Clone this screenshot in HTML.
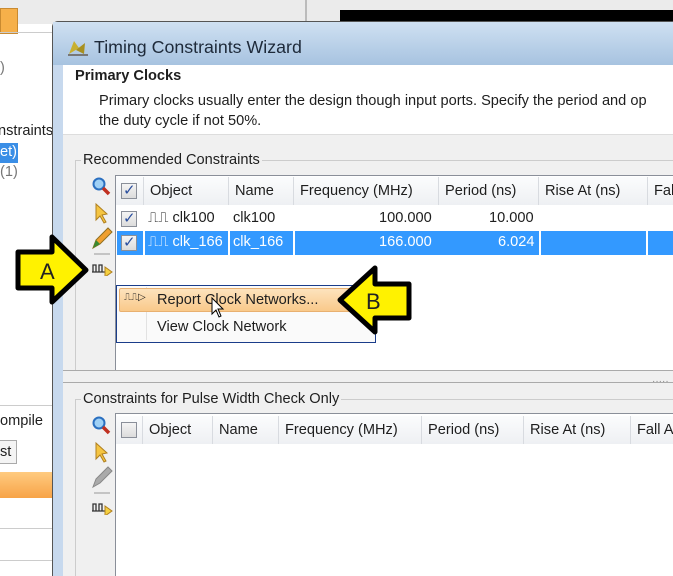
<!DOCTYPE html>
<html><head><style>
html,body{margin:0;width:673px;height:576px;overflow:hidden}
body{position:relative;background:#fff;font-family:"Liberation Sans","DejaVu Sans",sans-serif;font-size:14.6px;color:#1e1e1e}
.a{position:absolute}
.t{position:absolute;white-space:nowrap}
.hdr{position:absolute;background:linear-gradient(#fbfcfd,#eef0f3);border-right:1px solid #d8dbe0;height:28px;line-height:28px;padding-left:6px;box-sizing:border-box;white-space:nowrap;overflow:hidden}
.cb{position:absolute;width:14px;height:14px;border:1px solid #8a8f99;background:linear-gradient(#f4f4f4,#dcdcdc)}
.ck::after{content:"✓";position:absolute;left:1px;top:-3px;font-size:15px;color:#2b4f9e;font-weight:bold}
</style></head><body>
<div class="a" style="left:0;top:0;width:673px;height:24px;background:#ebebeb"></div>
<div class="a" style="left:0;top:8px;width:16px;height:24px;background:#f6b04a;border:1px solid #c98a30"></div>
<div class="a" style="left:0;top:32px;width:300px;height:1px;background:#ccc"></div>
<div class="a" style="left:305px;top:0;width:2px;height:24px;background:#bbb"></div>
<div class="a" style="left:340px;top:10px;width:333px;height:12px;background:#000"></div>
<div class="t" style="left:0;top:60px;color:#777">)</div>
<div class="t" style="left:-2px;top:123px">nstraints</div>
<div class="a" style="left:0;top:143px;width:18px;height:20px;background:#3a8ee6"></div>
<div class="t" style="left:0;top:144px;color:#fff">et)</div>
<div class="t" style="left:0;top:164px;color:#777">(1)</div>
<div class="a" style="left:0;top:405px;width:52px;height:1px;background:#ccc"></div>
<div class="t" style="left:0;top:413px">ompile</div>
<div class="a" style="left:0;top:440px;width:16px;height:22px;border:1px solid #aaa;border-left:none;background:#f4f4f4"></div>
<div class="t" style="left:0;top:444px">st</div>
<div class="a" style="left:0;top:472px;width:52px;height:26px;background:linear-gradient(#ffcb80,#f7a347)"></div>
<div class="a" style="left:0;top:528px;width:52px;height:1px;background:#ccc"></div>
<div class="a" style="left:0;top:560px;width:52px;height:1px;background:#ccc"></div>
<!-- dialog -->
<div class="a" style="left:52px;top:21px;width:630px;height:560px;background:#c7d9ee;border:1px solid #555;border-radius:6px 0 0 0"></div>
<div class="a" style="left:53px;top:22px;width:625px;height:43px;background:linear-gradient(#cfe0f2,#a7c3e0)"></div>
<svg class="a" style="left:66px;top:36px" width="24" height="22"><path d="M3 18 L8 5 L13 12 Z" fill="#c8b030"/><path d="M10 14 L19 7 L18 18 Z" fill="#a89020"/><path d="M2 19 L22 19" stroke="#777" stroke-width="2"/></svg>
<div class="t" style="left:94px;top:37px;font-size:17.8px;color:#1e2a3a">Timing Constraints Wizard</div>
<div class="a" style="left:63px;top:65px;width:610px;height:511px;background:#f0f0f0"></div>
<div class="a" style="left:63px;top:65px;width:610px;height:69px;background:#fff;border-bottom:1px solid #ddd"></div>
<div class="t" style="left:75px;top:68px;font-weight:bold">Primary Clocks</div>
<div class="t" style="left:99px;top:93px">Primary clocks usually enter the design though input ports. Specify the period and op</div>
<div class="t" style="left:99px;top:113px">the duty cycle if not 50%.</div>
<!-- group 1 -->
<div class="a" style="left:75px;top:160px;width:600px;height:210px;border:1px solid #ccc;border-right:none;border-bottom:none"></div>
<div class="t" style="left:81px;top:152px;background:#f0f0f0;padding:0 2px">Recommended Constraints</div>
<div class="a" style="left:115px;top:175px;width:560px;height:195px;background:#fff;border:1px solid #8a8f99;border-right:none;border-bottom:none"></div>
<div class="hdr" style="left:116px;top:177px;width:28px"></div><div class="cb ck" style="left:121px;top:183px"></div>
<div class="hdr" style="left:144px;top:177px;width:85px">Object</div>
<div class="hdr" style="left:229px;top:177px;width:65px">Name</div>
<div class="hdr" style="left:294px;top:177px;width:145px">Frequency (MHz)</div>
<div class="hdr" style="left:439px;top:177px;width:100px">Period (ns)</div>
<div class="hdr" style="left:539px;top:177px;width:109px">Rise At (ns)</div>
<div class="hdr" style="left:648px;top:177px;width:30px">Fal</div>
<div class="cb ck" style="left:121px;top:211px"></div>
<div class="t" style="left:148px;top:210px">⎍⎍ clk100</div>
<div class="t" style="left:233px;top:210px">clk100</div>
<div class="t" style="left:379px;top:210px">100.000</div>
<div class="t" style="left:489px;top:210px">10.000</div>
<div class="a" style="left:117px;top:231px;width:556px;height:24px;background:#3399ff"></div>
<div class="a" style="left:143px;top:231px;width:2px;height:24px;background:#fff"></div>
<div class="a" style="left:228px;top:231px;width:2px;height:24px;background:#fff"></div>
<div class="a" style="left:293px;top:231px;width:2px;height:24px;background:#fff"></div>
<div class="a" style="left:539px;top:231px;width:2px;height:24px;background:#fff"></div>
<div class="a" style="left:646px;top:231px;width:2px;height:24px;background:#fff"></div>
<div class="cb ck" style="left:121px;top:235px"></div>
<div class="t" style="left:148px;top:234px;color:#fff">⎍⎍ clk_166</div>
<div class="t" style="left:233px;top:234px;color:#fff">clk_166</div>
<div class="t" style="left:379px;top:234px;color:#fff">166.000</div>
<div class="t" style="left:498px;top:234px;color:#fff">6.024</div>
<!-- toolbar icons -->
<svg class="a" style="left:88px;top:176px" width="28" height="100">
<circle cx="11" cy="8" r="5.5" fill="#9fd0f5" stroke="#2a6fc0" stroke-width="2"/><path d="M15 12 L21 18" stroke="#c03020" stroke-width="3.5"/>
<path d="M8 28 L8 44 L12 40 L16 47 L18 46 L14 39 L19 38 Z" fill="#f5c542" stroke="#b08020"/>
<path d="M5 72 L8 64 L20 52 L24 56 L12 68 Z" fill="#f0a030" stroke="#907020"/><path d="M5 72 L8 64 L12 68Z" fill="#3a8a30"/>
<path d="M6 78 L22 78" stroke="#999"/>
<path d="M5 96 L5 89 L8 89 L8 96 L11 96 L11 89 L14 89 L14 96 M4 96 L18 96" stroke="#333" fill="none" stroke-width="1.3"/>
<path d="M17 91 L24 96 L17 101Z" fill="#f5d040" stroke="#b08020"/>
</svg>
<!-- menu -->
<div class="a" style="left:116px;top:285px;width:258px;height:56px;background:#fafafa;border:1px solid #1a3d8a"></div>
<div class="a" style="left:146px;top:287px;width:1px;height:53px;background:#e2e2e2"></div>
<div class="a" style="left:119px;top:288px;width:252px;height:24px;background:linear-gradient(#fde3bd,#f9c98a);border:1px solid #e8b070;border-radius:2px;box-sizing:border-box"></div>
<div class="t" style="left:124px;top:292px;font-size:10px">⎍⎍▷</div>
<div class="t" style="left:157px;top:292px">Report Clock Networks...</div>
<div class="t" style="left:157px;top:319px">View Clock Network</div>
<svg class="a" style="left:210px;top:296px" width="16" height="24"><path d="M2 2 L2 18 L6 14 L9 21 L11 20 L8 13 L13 13 Z" fill="#fff" stroke="#000"/></svg>
<!-- separators -->
<div class="a" style="left:63px;top:370px;width:610px;height:1px;background:#aaa"></div>
<div class="a" style="left:63px;top:382px;width:610px;height:1px;background:#aaa"></div>
<div class="t" style="left:652px;top:376px;font-size:10px;color:#888">·····</div>
<!-- group 2 -->
<div class="a" style="left:75px;top:399px;width:600px;height:190px;border:1px solid #ccc;border-right:none"></div>
<div class="t" style="left:81px;top:391px;background:#f0f0f0;padding:0 2px">Constraints for Pulse Width Check Only</div>
<div class="a" style="left:115px;top:413px;width:560px;height:170px;background:#fff;border:1px solid #8a8f99;border-right:none"></div>
<div class="hdr" style="left:116px;top:416px;width:27px"></div><div class="cb" style="left:121px;top:422px"></div>
<div class="hdr" style="left:143px;top:416px;width:70px">Object</div>
<div class="hdr" style="left:213px;top:416px;width:66px">Name</div>
<div class="hdr" style="left:279px;top:416px;width:143px">Frequency (MHz)</div>
<div class="hdr" style="left:422px;top:416px;width:102px">Period (ns)</div>
<div class="hdr" style="left:524px;top:416px;width:107px">Rise At (ns)</div>
<div class="hdr" style="left:631px;top:416px;width:50px">Fall A</div>
<svg class="a" style="left:88px;top:415px" width="28" height="100">
<circle cx="11" cy="8" r="5.5" fill="#9fd0f5" stroke="#2a6fc0" stroke-width="2"/><path d="M15 12 L21 18" stroke="#c03020" stroke-width="3.5"/>
<path d="M8 28 L8 44 L12 40 L16 47 L18 46 L14 39 L19 38 Z" fill="#f5c542" stroke="#b08020"/>
<path d="M5 72 L8 64 L20 52 L24 56 L12 68 Z" fill="#aaa" stroke="#888"/>
<path d="M6 78 L22 78" stroke="#999"/>
<path d="M5 96 L5 89 L8 89 L8 96 L11 96 L11 89 L14 89 L14 96 M4 96 L18 96" stroke="#333" fill="none" stroke-width="1.3"/>
<path d="M17 91 L24 96 L17 101Z" fill="#f5d040" stroke="#b08020"/>
</svg>
<!-- arrows -->
<svg class="a" style="left:0;top:0" width="673" height="576">
<polygon points="18,252 52,252 52,237 86,270 52,302 52,288 18,288" fill="#fff200" stroke="#000" stroke-width="5" stroke-linejoin="round"/>
<text x="40" y="279" font-family="Liberation Sans" font-size="22" fill="#222">A</text>
<polygon points="409,284 375,284 375,268 340,300 375,332 375,318 409,318" fill="#fff200" stroke="#000" stroke-width="5" stroke-linejoin="round"/>
<text x="366" y="309" font-family="Liberation Sans" font-size="22" fill="#222">B</text>
</svg>
</body></html>
